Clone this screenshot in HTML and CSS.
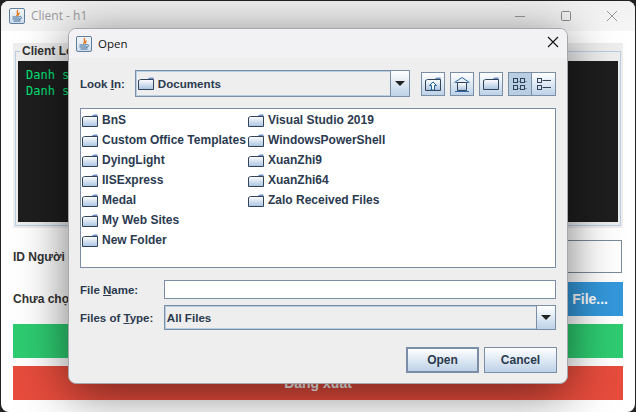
FILE: index.html
```html
<!DOCTYPE html>
<html lang="vi">
<head>
<meta charset="utf-8">
<title>Client - h1</title>
<link rel="stylesheet" href="styles.css">
</head>
<body>
<svg class="defs" width="0" height="0" aria-hidden="true">
  <defs>
    <linearGradient id="fg" x1="0" y1="0" x2="0" y2="1">
      <stop offset="0" stop-color="#ffffff"/><stop offset="1" stop-color="#a9c3e0"/>
    </linearGradient>
    <linearGradient id="jg" x1="0" y1="0" x2="0" y2="1">
      <stop offset="0" stop-color="#f6f8fb"/><stop offset="1" stop-color="#cfdcea"/>
    </linearGradient>
    <symbol id="folder" viewBox="0 0 16 13">
      <path d="M10 1.500 L12 .5 H15.500 V3 H10Z" fill="#6e8fc4"/>
      <path d="M.5 3.500 L2.500 2.500 H15.500 V12.500 H.5Z" fill="url(#fg)" stroke="#33445a" stroke-width="1"/>
    </symbol>
    <symbol id="java" viewBox="0 0 16 16">
      <rect x=".5" y=".5" width="15" height="15" rx="1.500" fill="url(#jg)" stroke="#5f7f9f"/>
      <path d="M9 2C6.500 4.500 10.500 5 7.500 8M10.500 4.500C9 5.500 10 6.500 9 7.500" fill="none" stroke="#e2761d" stroke-width="1.300"/>
      <path d="M3.500 9H10.500M3.500 11H10.500M4.500 13H11.500" stroke="#3a6a9a" stroke-width="1"/>
      <path d="M10.500 8.500C13.500 8.500 13 11 10 11.500" fill="none" stroke="#3a6a9a"/>
    </symbol>
  </defs>
</svg>

<main class="main-window">
  <header class="titlebar">
    <svg class="title-icon"><use href="#java"/></svg>
    <span class="title-text">Client - h1</span>
    <div class="win-controls">
      <svg width="12" height="12" viewBox="0 0 12 12"><path d="M1 6.500H11" stroke="#9a9a9a"/></svg>
      <svg width="12" height="12" viewBox="0 0 12 12"><rect x="1.500" y="1.500" width="9" height="9" rx="1" fill="none" stroke="#8a8a8a"/></svg>
      <svg width="12" height="12" viewBox="0 0 12 12"><path d="M1 1L11 11M11 1L1 11" stroke="#9a9a9a"/></svg>
    </div>
  </header>
  <div class="client-body">
    <div class="log-panel">
      <fieldset class="log-box">
        <legend>Client Lo</legend>
        <div class="log">
          <div>Danh s</div>
          <div>Danh s</div>
        </div>
      </fieldset>
    </div>
    <div class="id-row">
      <label>ID Người</label>
      <div class="id-input"></div>
    </div>
    <div class="file-row">
      <span>Chưa chọ</span>
      <div class="btn-choose">File...</div>
    </div>
    <div class="btn-send"></div>
    <div class="btn-logout">Đăng xuất</div>
  </div>
</main>

<section class="dialog">
  <header class="dlg-title">
    <svg class="title-icon"><use href="#java"/></svg>
    <span>Open</span>
    <svg class="dlg-close" width="12" height="12" viewBox="0 0 12 12"><path d="M1 1L11 11M11 1L1 11" stroke="#111" stroke-width="1.100"/></svg>
  </header>
  <div class="dlg-body">
    <div class="lookin-row">
      <label class="lbl-look">Look <u>I</u>n:</label>
      <div class="combo combo-look">
        <div class="combo-value"><svg class="fi"><use href="#folder"/></svg>Documents</div>
        <div class="combo-arrow"><i></i></div>
      </div>
      <div class="toolbar">
        <div class="tool"><svg width="16" height="14" viewBox="0 0 16 14"><path d="M10 1.500 L12 .5 H15.500 V3 H10Z" fill="#6e8fc4"/><path d="M.5 3.500 L2.500 2.500 H15.500 V13.500 H.5Z" fill="url(#fg)" stroke="#33445a"/><path d="M8 5L4.500 8.500H6.500V13H9.500V8.500H11.500Z" fill="#fff" stroke="#1f5f9e"/></svg></div>
        <div class="tool"><svg width="16" height="16" viewBox="0 0 16 16"><path d="M.5 6.500L8 1.500 15.500 6.500" fill="none" stroke="#2f6aa5"/><path d="M1.500 6.500H14.500" stroke="#2f6aa5"/><path d="M3.500 6.500H12.500V14.500H3.500Z" fill="url(#fg)" stroke="#33445a"/><path d="M1 15.500H15" stroke="#2f6aa5"/></svg></div>
        <div class="tool"><svg width="16" height="13"><use href="#folder"/></svg></div>
        <div class="view-group">
          <div class="tool tool-on"><svg width="16" height="14" viewBox="0 0 16 14" fill="none" stroke="#33445a"><rect x="1.500" y="1.500" width="4" height="4"/><rect x="8.500" y="1.500" width="4" height="4"/><rect x="1.500" y="8.500" width="4" height="4"/><rect x="8.500" y="8.500" width="4" height="4"/><path d="M6.500 4.500H7.500M13.500 4.500H14.500M6.500 11.500H7.500M13.500 11.500H14.500"/></svg></div>
          <div class="tool"><svg width="16" height="14" viewBox="0 0 16 14" fill="none" stroke="#33445a"><rect x="1.500" y="1.500" width="4" height="4"/><rect x="1.500" y="8.500" width="4" height="4"/><path d="M6.500 3.500H15M6.500 10.500H15"/></svg></div>
        </div>
      </div>
    </div>

    <div class="file-list">
      <div class="file-col col-a">
        <div class="file"><svg class="fi"><use href="#folder"/></svg>BnS</div>
        <div class="file"><svg class="fi"><use href="#folder"/></svg>Custom Office Templates</div>
        <div class="file"><svg class="fi"><use href="#folder"/></svg>DyingLight</div>
        <div class="file"><svg class="fi"><use href="#folder"/></svg>IISExpress</div>
        <div class="file"><svg class="fi"><use href="#folder"/></svg>Medal</div>
        <div class="file"><svg class="fi"><use href="#folder"/></svg>My Web Sites</div>
        <div class="file"><svg class="fi"><use href="#folder"/></svg>New Folder</div>
      </div>
      <div class="file-col">
        <div class="file"><svg class="fi"><use href="#folder"/></svg>Visual Studio 2019</div>
        <div class="file"><svg class="fi"><use href="#folder"/></svg>WindowsPowerShell</div>
        <div class="file"><svg class="fi"><use href="#folder"/></svg>XuanZhi9</div>
        <div class="file"><svg class="fi"><use href="#folder"/></svg>XuanZhi64</div>
        <div class="file"><svg class="fi"><use href="#folder"/></svg>Zalo Received Files</div>
      </div>
    </div>

    <div class="form-row name-row">
      <label>File <u>N</u>ame:</label>
      <div class="name-input"></div>
    </div>
    <div class="form-row type-row">
      <label>Files of <u>T</u>ype:</label>
      <div class="combo combo-type">
        <div class="combo-value">All Files</div>
        <div class="combo-arrow"><i></i></div>
      </div>
    </div>
    <div class="actions">
      <div class="btn btn-default">Open</div>
      <div class="btn">Cancel</div>
    </div>
  </div>
</section>
</body>
</html>
```
FILE: styles.css
```css
* { box-sizing: border-box; }
html, body { margin: 0; height: 100%; }
body {
  width: 636px; height: 412px; overflow: hidden; position: relative;
  background: #222;
  font-family: "Liberation Sans", Arial, sans-serif;
}
.defs { position: absolute; }

.main-window {
  position: absolute; left: 1px; top: 1px; width: 634px; height: 411px;
  background: #fff;
  border-radius: 8px;
  overflow: hidden;
}
.titlebar {
  height: 30px; display: flex; align-items: center; padding: 0 0 1px 8px;
  background: linear-gradient(#f1f1f1, #f6f6f6);
}
.title-icon { width: 16px; height: 16px; flex: none; }
.title-text { margin-left: 6px; font: 12px "Open Sans", sans-serif; color: #9c9c9c; }
.win-controls { margin-left: auto; display: flex; gap: 34px; padding-right: 17px; }

.client-body { padding: 12px 0 0 12px; width: 622px; display: flex; flex-direction: column; }
.log-panel { background: #eeeeee; height: 185px; padding: 1px 2px 2px 2px; }
.log-box {
  margin: 0; padding: 3px 2px 3px; height: 182px; min-width: 0;
  border: 1px solid #b8cfe3;
}
.log-box legend { padding: 0 2px; font: bold 12px/14px "Liberation Sans", sans-serif; color: #333; margin-left: 2px; }
.log {
  height: 161px; background: #1e1e1e; color: #00e676;
  font: 12px/16px "DejaVu Sans Mono", monospace; padding: 6px 8px;
}
.id-row { margin-top: 12px; height: 33px; display: flex; align-items: center; justify-content: space-between; }
.id-row label, .file-row span { font: bold 12px "Liberation Sans", sans-serif; color: #333; }
.id-input { width: 100px; height: 33px; border: 1px solid #7a8a99; margin-right: 1px; }
.file-row { margin-top: 9px; height: 34px; display: flex; align-items: center; justify-content: space-between; }
.btn-choose {
  width: 200px; height: 34px; background: #3498db; color: #fff;
  font: bold 14px/34px "Liberation Sans", sans-serif; text-align: right; padding-right: 15px;
}
.btn-send { margin-top: 8px; height: 34px; background: #2ecc71; }
.btn-logout {
  margin-top: 8px; height: 34px; background: #e74c3c; color: #fff;
  font: bold 14px/34px "Liberation Sans", sans-serif; text-align: center;
}

.dialog {
  position: absolute; left: 68px; top: 28px; width: 500px; height: 356px;
  background: #eeeeee; border: 1px solid #a4a8ad;
  border-radius: 8px;
  box-shadow: 0 8px 50px rgba(0,0,0,.55);
  overflow: hidden;
  color: #2b3a4f;
}
.dlg-title {
  height: 29px; display: flex; align-items: center; padding-left: 7px; background: #f2f1f4;
  font: 11.5px "Open Sans", sans-serif; color: #111;
}
.dlg-title span { margin-left: 6px; margin-bottom: 1px; }
.dlg-close { margin-left: auto; margin-right: 8px; margin-bottom: 3px; }
.dlg-body { padding: 12px 11px 0 11px; font: bold 12px "Liberation Sans", sans-serif; }
.dlg-body u { text-decoration: underline; }

.lookin-row { display: flex; align-items: center; height: 27px; }
.lbl-look { width: 55px; font-size: 11.5px; }
.combo { display: flex; border: 1px solid #7a8ea5; background: #eeeeee; font-size: 11.6px; }
.combo-look { width: 276px; height: 27px; }
.combo-value {
  flex: 1; display: flex; align-items: center; gap: 4px; padding-left: 1px;
  border: 1px solid #b8cfe3; border-right: 0;
}
.combo-arrow {
  width: 19px; display: flex; align-items: center; justify-content: center;
  border-left: 1px solid #7a8ea5;
  background: linear-gradient(#fff, #bdd2e8);
}
.combo-arrow i {
  width: 0; height: 0; border: 5px solid transparent; border-top: 5px solid #222; border-bottom: 0;
}
.fi { width: 16px; height: 13px; flex: none; }
.toolbar { display: flex; gap: 5px; margin-left: 11px; }
.tool {
  width: 24px; height: 24px; border: 1px solid #7a8ea5;
  background: linear-gradient(#fff, #bdd2e8);
  display: flex; align-items: center; justify-content: center;
}
.tool-on { background: #b8cfe3; }
.view-group { display: flex; }
.view-group .tool + .tool { border-left: 0; }

.file-list {
  margin-top: 11px; width: 476px; height: 160px; background: #fff;
  border: 1px solid #7a8ea5;
  display: flex; padding: 1px 0 0 1px;
}
.file-col { display: flex; flex-direction: column; }
.col-a { width: 166px; }
.file { height: 20px; display: flex; align-items: center; gap: 4px; white-space: nowrap; }

.form-row { display: flex; align-items: center; }
.form-row label { width: 84px; font-size: 11.5px; }
.name-row { margin-top: 12px; height: 19px; }
.name-input { width: 392px; height: 19px; background: #fff; border: 1px solid #7a8ea5; }
.type-row { margin-top: 6px; height: 25px; }
.combo-type { width: 393px; height: 25px; }
.actions { margin-top: 17px; display: flex; justify-content: flex-end; gap: 5px; width: 477px; }
.btn {
  width: 73px; height: 26px; border: 1px solid #7a8ea5;
  background: linear-gradient(#fff, #bdd2e8);
  font: bold 12px/24px "Liberation Sans", sans-serif; text-align: center;
}
.btn-default { border-width: 2px; line-height: 22px; }
```
